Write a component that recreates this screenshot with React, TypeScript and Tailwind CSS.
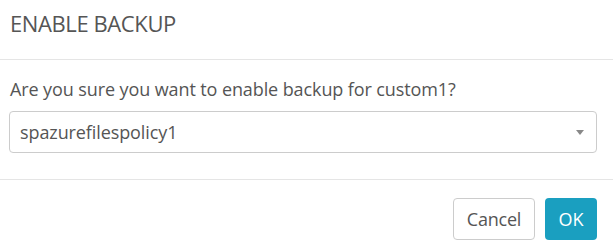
export default function App() {
  return (
    <div className="w-[613px] h-[248px] bg-white font-['Open_Sans',sans-serif] text-[#555]">
      <div className="h-[60px] pl-[10px] pt-[12px] border-b border-[#e5e5e5]">
        <h3 className="text-[22px] leading-[22px] tracking-[-0.4px] font-normal text-[#555]">ENABLE BACKUP</h3>
      </div>
      <div className="h-[120px] pl-[9px] pr-[16px] pt-[17px] border-b border-[#e5e5e5]">
        <p className="text-[18px] leading-[24px] tracking-[-0.1px] pl-[1px] text-[#555]">
          Are you sure you want to enable backup for custom1?
        </p>
        <div className="mt-[10px] h-[42px] border border-[#ccc] rounded-[4px] flex items-center justify-between pl-[10px] pr-[12px]">
          <span className="text-[18px] tracking-[-0.1px] text-[#555]">spazurefilespolicy1</span>
          <span className="w-0 h-0 border-l-[4px] border-r-[4px] border-t-[5px] border-l-transparent border-r-transparent border-t-[#888]" />
        </div>
      </div>
      <div className="flex justify-end items-start gap-[10px] pr-[16px] pt-[18px]">
        <button className="h-[42px] w-[82px] border border-[#ccc] rounded-[4px] text-[18px] tracking-[-0.2px] text-[#555] bg-white">
          Cancel
        </button>
        <button className="h-[42px] w-[52px] rounded-[4px] text-[18px] text-white bg-[#1a9fc0]">
          OK
        </button>
      </div>
    </div>
  );
}
